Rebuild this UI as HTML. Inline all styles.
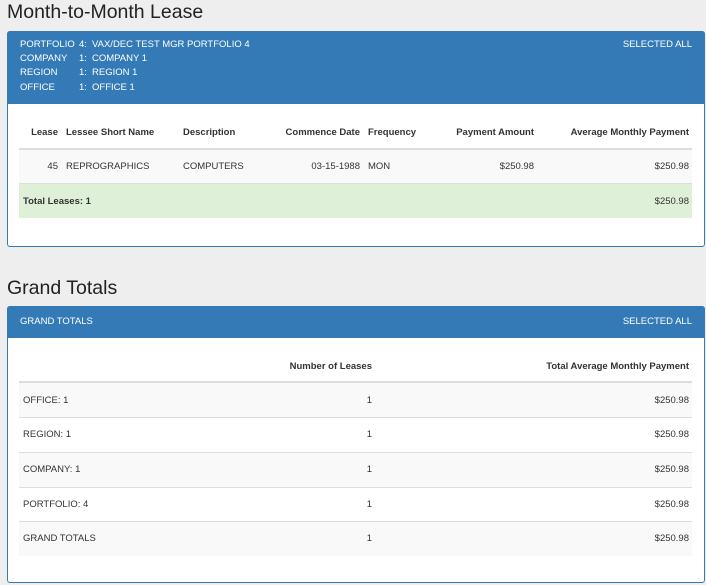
<!DOCTYPE html>
<html><head><meta charset="utf-8"><style>
*{margin:0;padding:0;box-sizing:border-box}
body{width:706px;height:585px;background:#eeeeee;font-family:"Liberation Sans",Arial,sans-serif;position:relative;overflow:hidden;color:#333}
.a{position:absolute;white-space:nowrap;font-size:9.5px;line-height:12px}
.h1{position:absolute;font-size:19.5px;color:#222;left:7px;line-height:24px}
.panel{position:absolute;left:7px;width:698px;background:#fff;border:1px solid #337ab7;border-radius:3px}
.hd{position:absolute;left:7px;width:698px;background:#337ab7;border-radius:3px 3px 0 0}
.w{color:#fff}
.b{font-weight:bold}
.r{text-align:right}
.row{position:absolute;left:19px;width:673px}
</style></head><body>
<div class="h1" style="top:0px">Month-to-Month Lease</div>
<div class="panel" style="top:31px;height:216px"></div>
<div class="hd" style="top:31px;height:73px"></div>
<div class="a w" style="left:20px;top:39px">PORTFOLIO</div><div class="a w" style="left:79px;top:39px">4:</div><div class="a w" style="left:92px;top:39px">VAX/DEC TEST MGR PORTFOLIO 4</div>
<div class="a w" style="left:20px;top:53px">COMPANY</div><div class="a w" style="left:79px;top:53px">1:</div><div class="a w" style="left:92px;top:53px">COMPANY 1</div>
<div class="a w" style="left:20px;top:67px">REGION</div><div class="a w" style="left:79px;top:67px">1:</div><div class="a w" style="left:92px;top:67px">REGION 1</div>
<div class="a w" style="left:20px;top:82px">OFFICE</div><div class="a w" style="left:79px;top:82px">1:</div><div class="a w" style="left:92px;top:82px">OFFICE 1</div>
<div class="a w" style="right:14px;top:39px">SELECTED ALL</div>

<div class="row" style="top:148px;height:2px;background:#ddd"></div>
<div class="row" style="top:150px;height:33px;background:#f9f9f9"></div>
<div class="row" style="top:183px;height:1px;background:#ddd"></div>
<div class="row" style="top:184px;height:34px;background:#dff0d8"></div>

<div class="a b r" style="right:648px;top:127px">Lease</div>
<div class="a b" style="left:66px;top:127px">Lessee Short Name</div>
<div class="a b" style="left:183px;top:127px">Description</div>
<div class="a b r" style="right:346px;top:127px">Commence Date</div>
<div class="a b" style="left:368px;top:127px">Frequency</div>
<div class="a b r" style="right:172px;top:127px">Payment Amount</div>
<div class="a b r" style="right:17px;top:127px">Average Monthly Payment</div>

<div class="a r" style="right:648px;top:161px">45</div>
<div class="a" style="left:66px;top:161px">REPROGRAPHICS</div>
<div class="a" style="left:183px;top:161px">COMPUTERS</div>
<div class="a r" style="right:346px;top:161px">03-15-1988</div>
<div class="a" style="left:368px;top:161px">MON</div>
<div class="a r" style="right:172px;top:161px">$250.98</div>
<div class="a r" style="right:17px;top:161px">$250.98</div>

<div class="a b" style="left:23px;top:196px">Total Leases: 1</div>
<div class="a r" style="right:17px;top:196px">$250.98</div>

<div class="h1" style="top:276px">Grand Totals</div>
<div class="panel" style="top:306px;height:277px"></div>
<div class="hd" style="top:306px;height:32px"></div>
<div class="a w" style="left:20px;top:316px">GRAND TOTALS</div>
<div class="a w" style="right:14px;top:316px">SELECTED ALL</div>

<div class="a b r" style="right:334px;top:361px">Number of Leases</div>
<div class="a b r" style="right:17px;top:361px">Total Average Monthly Payment</div>

<div class="row" style="top:381px;height:2px;background:#ddd"></div>
<div class="row" style="top:383px;height:34px;background:#f9f9f9"></div>
<div class="row" style="top:417px;height:1px;background:#ddd"></div>
<div class="row" style="top:452px;height:1px;background:#ddd"></div>
<div class="row" style="top:453px;height:34px;background:#f9f9f9"></div>
<div class="row" style="top:487px;height:1px;background:#ddd"></div>
<div class="row" style="top:521px;height:1px;background:#ddd"></div>
<div class="row" style="top:522px;height:34px;background:#f9f9f9"></div>

<div class="a" style="left:23px;top:395px">OFFICE: 1</div><div class="a r" style="right:334px;top:395px">1</div><div class="a r" style="right:17px;top:395px">$250.98</div>
<div class="a" style="left:23px;top:429px">REGION: 1</div><div class="a r" style="right:334px;top:429px">1</div><div class="a r" style="right:17px;top:429px">$250.98</div>
<div class="a" style="left:23px;top:464px">COMPANY: 1</div><div class="a r" style="right:334px;top:464px">1</div><div class="a r" style="right:17px;top:464px">$250.98</div>
<div class="a" style="left:23px;top:499px">PORTFOLIO: 4</div><div class="a r" style="right:334px;top:499px">1</div><div class="a r" style="right:17px;top:499px">$250.98</div>
<div class="a" style="left:23px;top:533px">GRAND TOTALS</div><div class="a r" style="right:334px;top:533px">1</div><div class="a r" style="right:17px;top:533px">$250.98</div>
</body></html>
